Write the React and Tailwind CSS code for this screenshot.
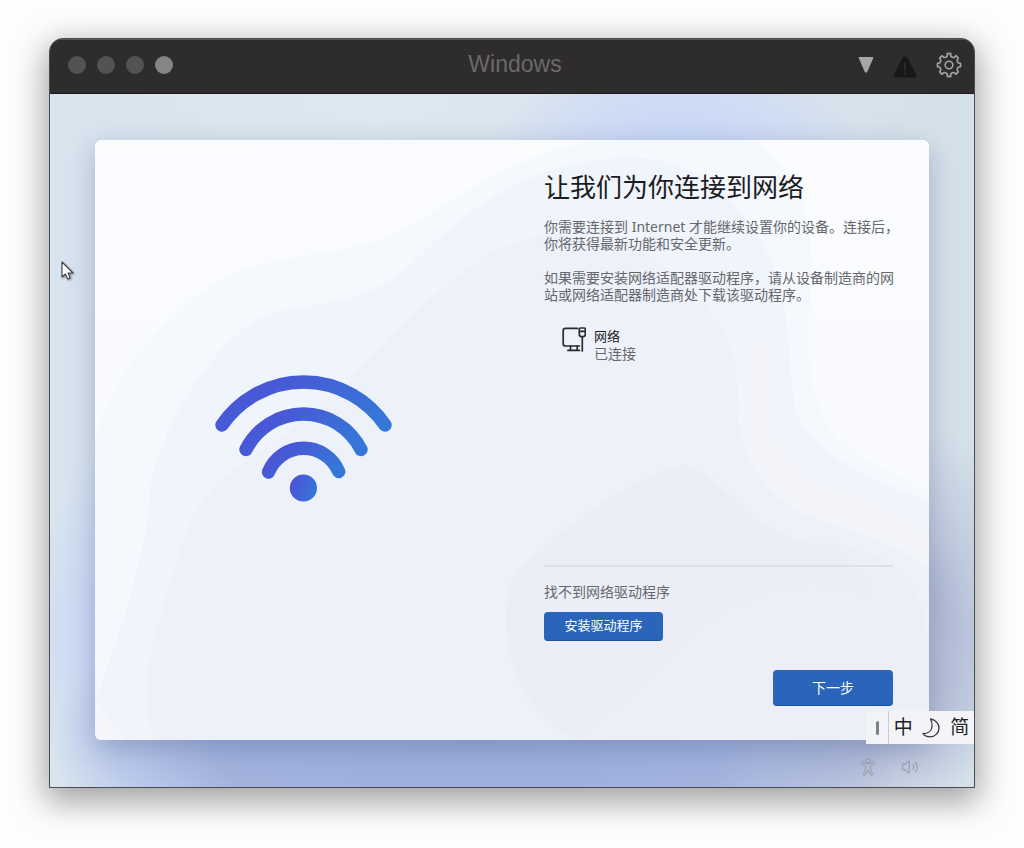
import React from 'react';
import { Volume2 } from 'lucide-react';

const GEAR_TEETH = 8;

// Outline of a gear: short outer arcs with a round notch between each pair of teeth
function gearPath(cx, cy, r) {
  const point = (deg) => {
    const rad = (deg * Math.PI) / 180;
    return `${(cx + r * Math.cos(rad)).toFixed(2)} ${(cy + r * Math.sin(rad)).toFixed(2)}`;
  };
  let d = '';
  for (let i = 0; i < GEAR_TEETH; i++) {
    const angle = (i * 360) / GEAR_TEETH - 90;
    d += `${i === 0 ? 'M' : 'L'}${point(angle - 9)} A${r} ${r} 0 0 1 ${point(angle + 9)} `;
    d += `A2.6 2.8 0 0 0 ${point(angle + 36)} `;
  }
  return d + 'Z';
}

const GEAR = gearPath(13, 13, 11.6);

function GearIcon() {
  return (
    <svg viewBox="0 0 26 26" className="w-[26px] h-[26px]" fill="none" stroke="currentColor" strokeWidth="1.6" strokeLinejoin="round">
      <path d={GEAR} />
      <circle cx="13" cy="13" r="3.8" />
    </svg>
  );
}

function WarningIcon() {
  return (
    <svg viewBox="0 0 24 22" className="w-6 h-[22px]">
      <path d="M9.8 1.8a2.500 2.500 0 0 1 4.400 0l9 16.600a2.100 2.100 0 0 1-1.900 3.100H2.700a2.100 2.100 0 0 1-1.900-3.100z" fill="#181818" />
      <path d="M12 7v7.500M12 17.200v1.200" stroke="#2e2c2d" strokeWidth="1.800" strokeLinecap="round" />
    </svg>
  );
}

function WifiIcon() {
  return (
    <svg viewBox="0 0 177 127" className="w-[177px] h-[127px]" fill="none" strokeWidth="13.4" strokeLinecap="round">
      <defs>
        <linearGradient id="wifi" x1="0" y1="0.3" x2="1" y2="0.7">
          <stop offset="0" stopColor="#4c52d6" />
          <stop offset="1" stopColor="#3577d8" />
        </linearGradient>
      </defs>
      <path d="M7 50A98.7 98.7 0 0 1 170 50" stroke="url(#wifi)" />
      <path d="M31 74.5A64.3 64.3 0 0 1 146 74.5" stroke="url(#wifi)" />
      <path d="M53.5 97A38 38 0 0 1 123.7 96.5" stroke="url(#wifi)" />
      <circle cx="88.4" cy="113" r="13.6" fill="url(#wifi)" />
    </svg>
  );
}

function EthernetIcon() {
  return (
    <svg viewBox="0 0 24 25" className="w-6 h-[25px] shrink-0" fill="none" stroke="#2b2b2b" strokeWidth="1.7" strokeLinecap="round" strokeLinejoin="round">
      <path d="M15.5 1.4H3.5a2.3 2.3 0 0 0-2.3 2.3v13a2.3 2.3 0 0 0 2.3 2.3h14" />
      <path d="M8.5 19v4.2M15.2 19v4.2M6 23.4h11.5" />
      <path d="M18.3 1h4a1 1 0 0 1 1 1v5.6a2 2 0 0 1-2 2h-2a2 2 0 0 1-2-2V2a1 1 0 0 1 1-1zM17.3 4.3h6M20.3 9.6V24" />
    </svg>
  );
}

function MoonIcon() {
  return (
    <svg viewBox="0 0 18 20" className="w-[18px] h-5" fill="none" stroke="#333" strokeWidth="1.3" strokeLinejoin="round">
      <path d="M8.500 1C13.500 2 17 5.500 17 10C17 15.200 13 18.800 8 18.800C5 18.800 2.500 17.800 1 15.600C5 15.600 9.300 13.500 10 9C10.300 6 9.800 3 8.500 1Z" />
    </svg>
  );
}

function AccessibilityIcon() {
  return (
    <svg viewBox="0 0 16 18" className="w-4 h-[18px]" fill="none" stroke="currentColor" strokeWidth="1.2" strokeLinejoin="round">
      <circle cx="8" cy="3" r="2.1" />
      <path d="M3 4a1.200 1.200 0 0 0-1 2.200L5.500 8v2.500L3.600 15.500a1.100 1.100 0 0 0 2 .9L8 12l2.400 4.400a1.100 1.100 0 0 0 2-.9L10.500 10.500V8L14 6.200A1.200 1.200 0 0 0 13 4L9.700 5.600H6.300z" />
    </svg>
  );
}

function Cursor() {
  return (
    <svg viewBox="0 0 14 20" className="absolute left-[11px] top-[167px] w-[14px] h-5 drop-shadow-[1px_1px_1px_rgba(0,0,0,0.4)]">
      <path d="M1 1v15l3.400-3 2.300 5 2.500-1.100-2.200-4.900H12z" fill="#fff" stroke="#3c3f46" strokeWidth="1.100" strokeLinejoin="round" />
    </svg>
  );
}

// Soft bloom shapes that show through the card
function CardArt() {
  return (
    <svg viewBox="0 0 833 600" preserveAspectRatio="none" className="absolute inset-0 w-full h-full" aria-hidden="true">
      <defs>
        <linearGradient id="cardBase" x1="0" y1="0" x2="0" y2="1">
          <stop offset="0" stopColor="#fafcfe" />
          <stop offset="0.600" stopColor="#f8fafe" />
          <stop offset="1" stopColor="#f4f6fb" />
        </linearGradient>
      </defs>
      <rect width="833" height="600" fill="url(#cardBase)" />
      <path d="M0 300C20 230 60 190 110 150C170 110 230 120 290 98C360 65 400 20 500 0H660C700 30 716 70 715 130C713 200 706 240 735 290C765 325 800 330 833 355V600H30C10 580 0 550 0 510Z" fill="#f5f8fd" />
      <path d="M0 560C30 480 50 420 55 350C65 290 110 210 165 178C210 160 260 170 310 130C370 70 430 24 520 18C590 12 640 50 670 110C700 170 690 230 700 270C720 320 780 340 833 362V600H30Z" fill="#f0f4fb" />
      <path d="M60 600C40 550 60 490 80 430C90 380 110 345 160 315C240 265 290 190 370 130C430 85 500 80 560 120C610 160 645 195 642 260C640 310 660 350 720 375C770 395 810 400 833 415V600Z" fill="#edf1fa" />
      <path d="M650 200C665 190 680 200 678 235C672 300 690 330 750 350C790 362 815 375 833 392V430C800 400 760 395 710 375C650 345 635 290 650 200Z" fill="#f2f4f9" />
      <path d="M415 440C450 400 540 330 590 325C620 330 650 385 700 400C770 410 820 440 826 480C826 540 780 600 700 600H480C420 570 400 500 415 440Z" fill="#ebeef7" />
      <path d="M480 600C560 540 600 460 700 445C740 440 770 455 775 460C770 430 740 410 720 400C780 410 826 430 830 490V600Z" fill="#eceff8" />
    </svg>
  );
}

export default function App() {
  return (
    <div className="min-h-screen flex flex-col bg-[#fdfdfd] px-[49px] pt-[38px] pb-[60px] font-['Noto_Sans','Noto_Sans_CJK_SC',sans-serif]">
      <div className="flex-1 flex flex-col rounded-t-[14px] overflow-hidden border border-[#4b4c52] bg-[#2e2c2d] shadow-[0_10px_32px_4px_rgba(0,0,0,0.36)]">
        {/* Title bar */}
        <header className="h-[55px] grid grid-cols-[1fr_auto_1fr] items-center pl-[18px] pr-3 pb-1 border-t border-b border-t-[#575757] border-b-[#1b1a1b]">
          <div className="flex items-center gap-[11px]">
            <button type="button" aria-label="关闭" className="w-[18px] h-[18px] rounded-full bg-[#545253]" />
            <button type="button" aria-label="最小化" className="w-[18px] h-[18px] rounded-full bg-[#545253]" />
            <button type="button" aria-label="缩放" className="w-[18px] h-[18px] rounded-full bg-[#545253]" />
            <button type="button" aria-label="融合" className="w-[18px] h-[18px] rounded-full bg-[#858486]" />
          </div>
          <h1 className="font-['Liberation_Sans',sans-serif] text-[23px] text-[#6b696a]">Windows</h1>
          <div className="flex items-center justify-end gap-[19px]">
            <button type="button" aria-label="菜单">
              <svg viewBox="0 0 16 16" className="w-4 h-4">
                <path d="M1 .5h14l-6.200 14.300a.9.9 0 0 1-1.600 0z" fill="#a6a5a7" stroke="#a6a5a7" strokeLinejoin="round" />
              </svg>
            </button>
            <button type="button" aria-label="警告" className="pt-1">
              <WarningIcon />
            </button>
            <button type="button" aria-label="设置" className="text-[#a5a4a5]">
              <GearIcon />
            </button>
          </div>
        </header>

        {/* Desktop */}
        <main className="relative flex-1 flex flex-col px-[45px] pt-[46px] bg-[radial-gradient(ellipse_20%_16%_at_68%_8%,#c9d7f8_0%,#cfdcf5_50%,transparent_100%),radial-gradient(ellipse_46%_28%_at_46%_94%,#9fafdd_0%,#a3b3de_60%,transparent_100%),radial-gradient(ellipse_17%_34%_at_15%_78%,#b6c6ee_0%,#cbd9f5_65%,transparent_100%),radial-gradient(ellipse_20%_24%_at_84%_84%,#a9b2d2_0%,#b2bbd6_50%,transparent_100%),radial-gradient(ellipse_10%_26%_at_96%_74%,#b3bcd6_0%,transparent_100%),linear-gradient(90deg,#d8e4ee_0%,#dde8f0_35%,#d5e1ea_100%)]">
          <section className="relative flex-1 grid grid-cols-[1fr_385px] rounded-md overflow-hidden shadow-[0_8px_28px_rgba(60,80,130,0.34)]">
            <CardArt />

            <div className="relative flex items-center justify-center pr-8 pb-1">
              <WifiIcon />
            </div>

            <div className="relative flex flex-col pt-7 pr-9 pb-[34px]">
              <h2 className="text-[26px] leading-[38px] text-[#1c1c1e] whitespace-nowrap">让我们为你连接到网络</h2>
              <p className="mt-3 text-sm leading-[17px] text-[#66676c] whitespace-nowrap">
                你需要连接到 Internet 才能继续设置你的设备。连接后，
                <br />
                你将获得最新功能和安全更新。
              </p>
              <p className="mt-[17px] text-sm leading-[17px] text-[#66676c] whitespace-nowrap">
                如果需要安装网络适配器驱动程序，请从设备制造商的网
                <br />
                站或网络适配器制造商处下载该驱动程序。
              </p>

              <button type="button" className="mt-6 ml-[18px] flex items-start gap-2 self-start text-left">
                <EthernetIcon />
                <span className="flex flex-col">
                  <span className="text-[13px] leading-[18px] text-[#1c1c1e]">网络</span>
                  <span className="text-sm leading-[18px] text-[#66676c]">已连接</span>
                </span>
              </button>

              <div className="mt-auto border-t-2 border-[#dfe1e8] pt-[15px]">
                <p className="text-sm leading-5 text-[#66676c]">找不到网络驱动程序</p>
                <button
                  type="button"
                  className="mt-[10px] block w-[119px] h-[29px] rounded bg-[#2a65bb] border-b border-[#1f509a] text-[13px] text-white"
                >
                  安装驱动程序
                </button>
              </div>
              <button
                type="button"
                className="mt-[29px] self-end w-[120px] h-9 rounded bg-[#2a65bb] border-b border-[#1f509a] text-sm text-white"
              >
                下一步
              </button>
            </div>
          </section>

          <footer className="h-[47px] flex items-center justify-end gap-[25px] pt-1.5 pr-[10px] text-[#a3a5b2]">
            <button type="button" aria-label="辅助功能">
              <AccessibilityIcon />
            </button>
            <button type="button" aria-label="音量">
              <Volume2 className="w-[18px] h-[18px]" strokeWidth={1.75} />
            </button>
          </footer>

          {/* IME bar, floats over the card corner */}
          <div className="absolute right-0 bottom-[43px] w-[108px] h-[33px] flex items-stretch bg-[#f2f4f8] text-[19px] text-[#222]">
            <div className="w-[23px] flex items-center justify-center border-r border-[#c9cbd0]">
              <span className="w-[3px] h-[14px] rounded-full bg-[#808186]" />
            </div>
            <button type="button" className="flex-1">中</button>
            <button type="button" aria-label="半角" className="flex-1 flex items-center justify-center">
              <MoonIcon />
            </button>
            <button type="button" className="flex-1">简</button>
          </div>

          <Cursor />
        </main>
      </div>
    </div>
  );
}
